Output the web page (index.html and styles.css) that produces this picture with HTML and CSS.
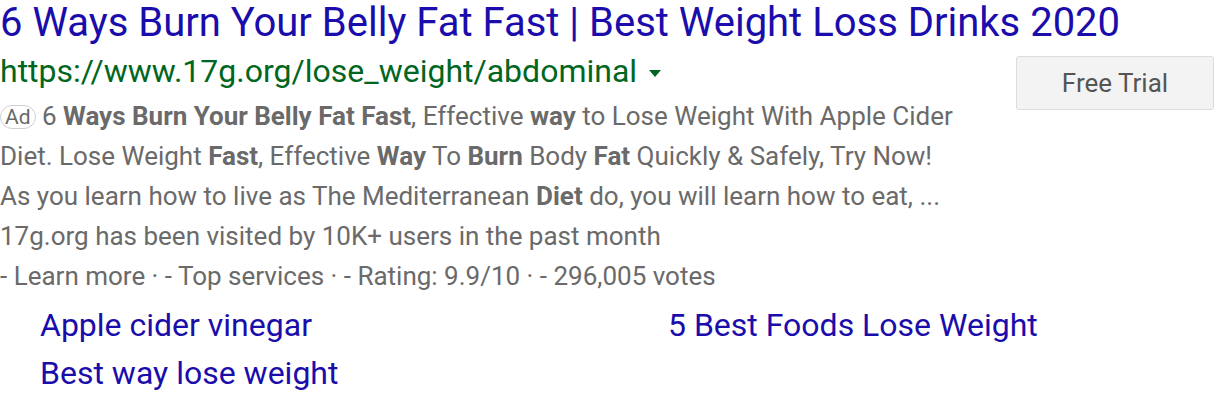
FILE: index.html
```html
<!DOCTYPE html>
<html>
<head>
<meta charset="utf-8">
<link rel="stylesheet" href="styles.css">
</head>
<body>
<div class="ad">
  <a class="title" href="#">6 Ways Burn Your Belly Fat Fast | Best Weight Loss Drinks 2020</a>
  <div class="row">
    <div class="main">
      <div class="url">https://www.17g.org/lose_weight/abdominal <span class="caret"></span></div>
      <div class="desc"><span class="badge">Ad</span> 6 <b>Ways Burn Your Belly Fat Fast</b>, Effective <b>way</b> to Lose Weight With Apple Cider Diet. Lose Weight <b>Fast</b>, Effective <b>Way</b> To <b>Burn</b> Body <b>Fat</b> Quickly &amp; Safely, Try Now!</div>
      <div class="desc">As you learn how to live as The Mediterranean <b>Diet</b> do, you will learn how to eat, ...</div>
      <div class="desc">17g.org has been visited by 10K+ users in the past month</div>
      <div class="desc">- Learn more · - Top services · - Rating: 9.9/10 · - 296,005 votes</div>
    </div>
    <button class="cta">Free Trial</button>
  </div>
  <div class="links">
    <a href="#">Apple cider vinegar</a>
    <a href="#">5 Best Foods Lose Weight</a>
    <a href="#">Best way lose weight</a>
  </div>
</div>
</body>
</html>
```
FILE: styles.css
```css
html, body {
  margin: 0;
  padding: 0;
  background: #fff;
}
body {
  font-family: Roboto, "Liberation Sans", Arial, sans-serif;
}
.ad {
  display: flex;
  flex-direction: column;
}
.title {
  display: block;
  color: #1a0dab;
  font-size: 40px;
  line-height: 46px;
  text-decoration: none;
  white-space: nowrap;
}
.row {
  display: flex;
  align-items: flex-start;
}
.main {
  width: 980px;
}
.url {
  color: #006621;
  font-size: 32px;
  line-height: 50px;
}
.caret {
  display: inline-block;
  width: 0;
  height: 0;
  border-left: 6px solid transparent;
  border-right: 6px solid transparent;
  border-top: 7px solid #006621;
  vertical-align: middle;
  margin-left: 4px;
}
.desc {
  color: #6a6a6a;
  font-size: 26px;
  line-height: 40px;
}
.desc b {
  font-weight: 700;
}
.badge {
  display: inline-block;
  border: 1px solid #d0d0d0;
  border-radius: 12px;
  font-size: 21px;
  line-height: 22px;
  padding: 0 4px;
  margin-left: 0;
  vertical-align: 1px;
}
.cta {
  margin: 10px 0 0 36px;
  width: 198px;
  height: 54px;
  background: #f3f3f3;
  border: 1px solid #dcdcdc;
  border-radius: 3px;
  color: #555;
  font-family: Roboto, "Liberation Sans", Arial, sans-serif;
  font-size: 26px;
}
.links {
  display: grid;
  grid-template-columns: 628px auto;
  padding-left: 40px;
  margin-top: 5px;
}
.links a {
  color: #1a0dab;
  font-size: 32px;
  line-height: 48px;
  text-decoration: none;
}
```
